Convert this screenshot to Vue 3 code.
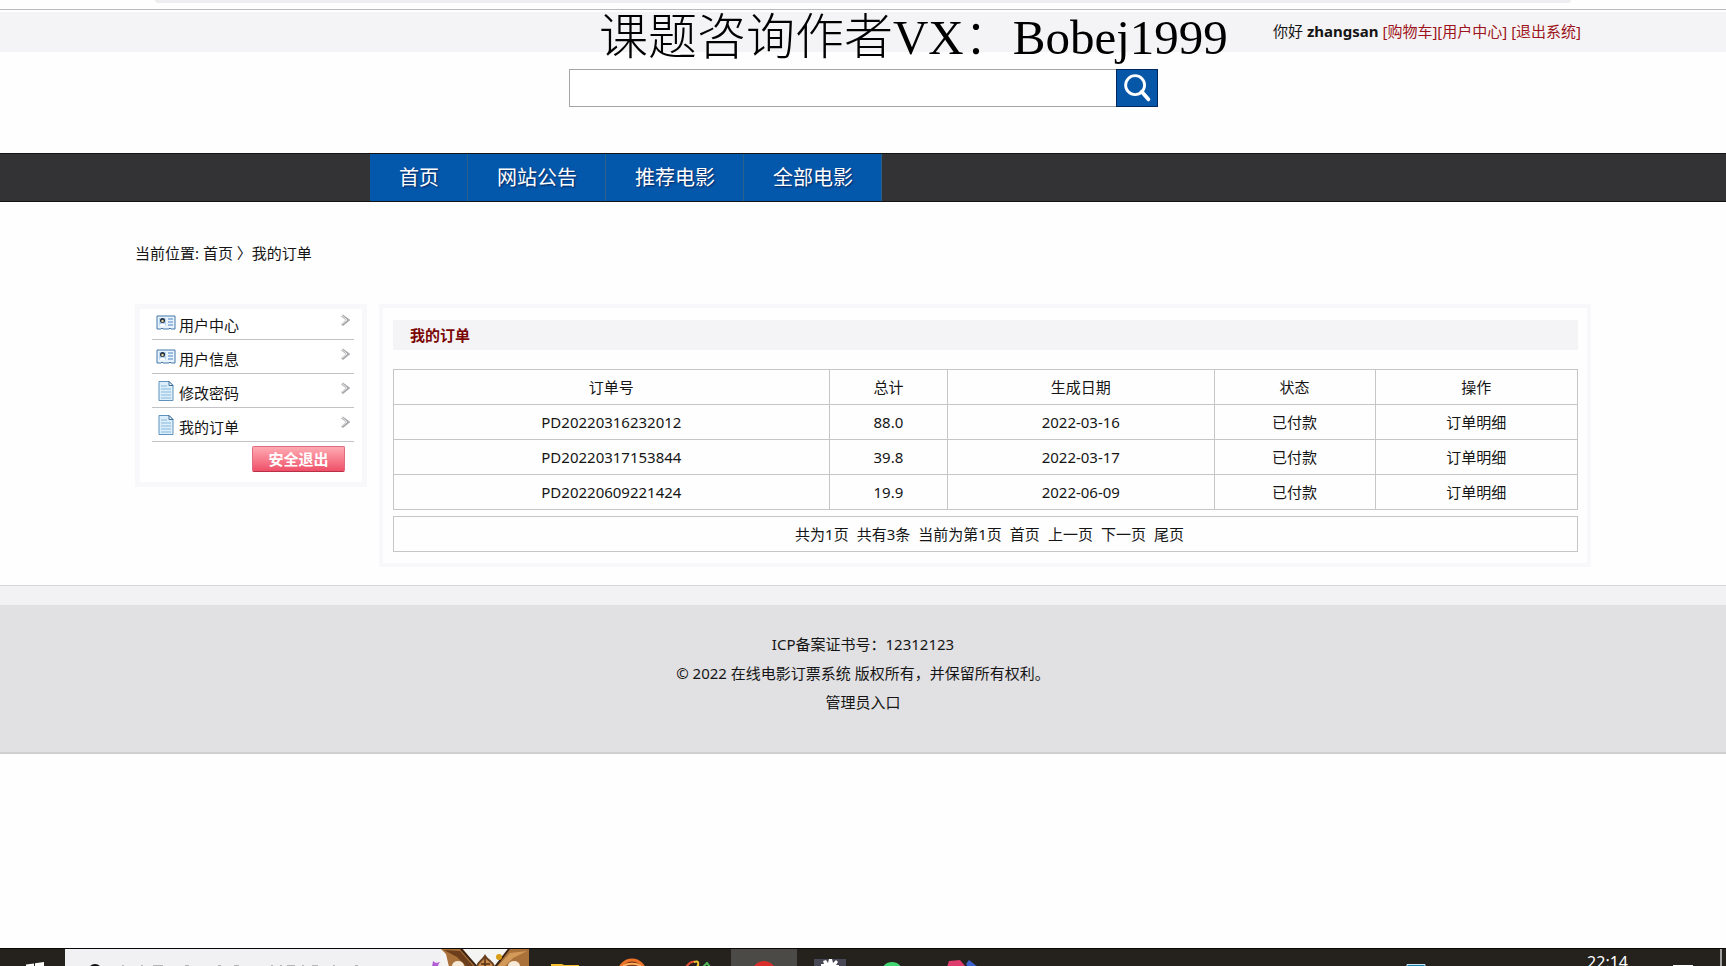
<script setup>
import { ref } from 'vue'

const keyword = ref('')
const navItems = ['首页', '网站公告', '推荐电影', '全部电影']
const menu = [
  { label: '用户中心', icon: 'card' },
  { label: '用户信息', icon: 'card' },
  { label: '修改密码', icon: 'doc' },
  { label: '我的订单', icon: 'doc' },
]
const columns = ['订单号', '总计', '生成日期', '状态', '操作']
const orders = [
  { id: 'PD20220316232012', total: '88.0', date: '2022-03-16' },
  { id: 'PD20220317153844', total: '39.8', date: '2022-03-17' },
  { id: 'PD20220609221424', total: '19.9', date: '2022-06-09' },
]
const pages = ['首页', '上一页', '下一页', '尾页']
</script>

<template>
  <div class="page">
    <div class="chrome"><div class="address"></div></div>

    <header class="topbar">
      <div class="wrap user">
        <span>你好 <b>zhangsan</b>&nbsp;</span>
        <a href="#">[购物车]</a><a href="#">[用户中心]</a>&nbsp;<a href="#">[退出系统]</a>
      </div>
      <div class="watermark">课题咨询作者VX：Bobej1999</div>
    </header>

    <form class="search" @submit.prevent>
      <input v-model="keyword" type="text" aria-label="搜索" />
      <button type="submit" aria-label="搜索">
        <svg viewBox="0 0 42 38" fill="none" stroke="#fff">
          <circle cx="19" cy="16" r="10" stroke-width="3" />
          <path d="M26 23 33 31" stroke-width="4" stroke-linecap="round" />
        </svg>
      </button>
    </form>

    <nav class="nav">
      <div class="wrap nav-list">
        <a v-for="item in navItems" :key="item" href="#">{{ item }}</a>
      </div>
    </nav>

    <div class="wrap crumbs">
      <span>当前位置: <a href="#">首页</a> 〉<a href="#">我的订单</a></span>
    </div>

    <main class="wrap content">
      <aside class="side">
        <ul>
          <li v-for="m in menu" :key="m.label">
            <svg v-if="m.icon === 'card'" class="icon" viewBox="0 0 20 20">
              <path d="M1 3h18v13h-4l-1-1-1 1H7l-1-1-1 1H1z" fill="#e8f3fc" stroke="#4477ab" />
              <path d="M3 5h7v8H3z" fill="#b5d6f2" />
              <circle cx="6.500" cy="7.500" r="2.500" fill="#1d2a3c" />
              <circle cx="6.500" cy="8" r="1.200" fill="#f3d79c" />
              <path d="M3.500 13c0-3 6-3 6 0z" fill="#fff" />
              <path d="M12 6h5M12 9h5M12 12h5" stroke="#4f86c4" />
            </svg>
            <svg v-else class="icon" viewBox="0 0 20 20">
              <path d="M3 .5h10l4 4v15H3z" fill="#dceefa" stroke="#5f93bd" />
              <path d="M13 .5v4h4z" fill="#fff" stroke="#3c6d99" />
              <path d="M5 5h6M5 8h10M5 11h10M5 14h10M5 17h10" stroke="#85b8dc" />
            </svg>
            <a href="#">{{ m.label }}</a>
            <svg class="chev" viewBox="0 0 10 12" fill="none">
              <path d="M2 1.500 8 6 2 11" stroke="#a9a9ad" stroke-width="2.800" />
              <path d="M2 1.500 7 6 2 10" stroke="#eee" stroke-width="1" />
            </svg>
          </li>
        </ul>
        <button class="logout" type="button">安全退出</button>
      </aside>

      <section class="panel">
        <h1>我的订单</h1>
        <table>
          <colgroup>
            <col class="c1" /><col class="c2" /><col class="c3" /><col class="c4" /><col class="c5" />
          </colgroup>
          <thead>
            <tr><th v-for="c in columns" :key="c" scope="col">{{ c }}</th></tr>
          </thead>
          <tbody>
            <tr v-for="o in orders" :key="o.id">
              <td>{{ o.id }}</td>
              <td>{{ o.total }}</td>
              <td>{{ o.date }}</td>
              <td>已付款</td>
              <td><a href="#">订单明细</a></td>
            </tr>
          </tbody>
        </table>
        <div class="pager">
          <span>共为1页</span><span>共有3条</span><span>当前为第1页</span>
          <a v-for="p in pages" :key="p" href="#">{{ p }}</a>
        </div>
      </section>
    </main>

    <footer class="footer">
      <p>ICP备案证书号：12312123</p>
      <p>© 2022 在线电影订票系统 版权所有，并保留所有权利。</p>
      <p><a href="#">管理员入口</a></p>
    </footer>

    <div class="taskbar">
      <button class="start" type="button" aria-label="开始">
        <svg viewBox="0 0 65 18"><path d="M26 15.500 34 14.500V18h-8zM35 14.300 44 13v5h-9z" fill="#fff" /></svg>
      </button>
      <div class="finder">
        <svg class="hint" viewBox="0 0 376 18" fill="none">
          <circle cx="30" cy="22" r="6" stroke="#111" stroke-width="2" />
          <path d="M57 17h2M76 17h2M88 17h10M120 17h4M153 17h3M169 17h5M207 16v2M216 16v2M222 17h8M238 16v2M247 17h6M268 17h2M290 17h3" stroke="#777" />
          <path d="m368 12 3 2 4-1-2 3 1 2h-7z" fill="#b15ed4" />
        </svg>
        <svg class="art" viewBox="0 0 88 18">
          <path d="M0 0h88v18H0z" fill="#f4f5f3" />
          <path d="M0 0h22l14 18H8L5 5z" fill="#aa713b" />
          <path d="M88 0H68L53 18h35z" fill="#aa713b" />
          <path d="M3 1 19 2 33 18h-7L16 8z" fill="#6d3e1b" />
          <path d="M86 2 69 4 56 18h7L72 9z" fill="#d39a59" />
          <path d="M20 0 36 18M68 0 54 18" stroke="#3c2415" stroke-width="2" />
          <ellipse cx="17" cy="17" rx="6" ry="5" fill="#f6e9d8" />
          <ellipse cx="73" cy="17" rx="6" ry="5" fill="#f6e9d8" />
          <path d="M36 18c0-5 5-6 8-11 3 5 9 6 9 11z" fill="#c98a4b" stroke="#67401f" stroke-width="2" />
          <path d="M44 9v9M40 15h9" stroke="#573116" stroke-width="1.500" />
          <circle cx="58" cy="8" r="3" fill="#d99d17" />
        </svg>
      </div>
      <div class="apps">
        <button type="button" aria-label="文件资源管理器">
          <svg viewBox="0 0 66 18"><path d="M18 15h11l2 1h15v2H18z" fill="#f6bd2c" /></svg>
        </button>
        <button type="button" aria-label="浏览器">
          <svg viewBox="0 0 66 18" fill="none"><circle cx="33" cy="24" r="13" fill="#7b3a14" stroke="#ef7328" stroke-width="3" /><path d="M24 17c5-3 13-3 18 0" stroke="#ffb160" stroke-width="2" /></svg>
        </button>
        <button type="button" aria-label="设计工具">
          <svg viewBox="0 0 66 18" fill="none" stroke-width="2"><path d="M21 18c3-4 6-6 9-5" stroke="#e64d32" /><path d="M29 13c5-2 5 2 3 5" stroke="#f2c432" /><path d="m38 18 4-4 3 4" stroke="#50ba5a" /></svg>
        </button>
        <button class="active" type="button" aria-label="录屏">
          <svg viewBox="0 0 66 18"><circle cx="33" cy="24" r="12" fill="#d92e2a" /></svg>
        </button>
        <button type="button" aria-label="视频工具">
          <svg viewBox="0 0 66 18"><path d="M17 10h32v8H17z" fill="#484756" /><path d="M24 18v-3h3l-1-3 3-1 2 3 1-4h3l1 4 3-3 2 2-2 3h3v2z" fill="#fff" /></svg>
        </button>
        <button type="button" aria-label="微信">
          <svg viewBox="0 0 66 18"><circle cx="29" cy="24" r="11" fill="#42d673" /></svg>
        </button>
        <button type="button" aria-label="开发工具">
          <svg viewBox="0 0 66 18"><path d="m20 12 11-1 6 7H18z" fill="#dd3c6c" /><path d="m37 15 3-4 9 7H39z" fill="#3c62ce" /></svg>
        </button>
      </div>
      <div class="tray">
        <svg class="screen" viewBox="0 0 20 18"><path d="M1 18v-2.500h18V18" fill="#1c7ca8" stroke="#c5e6f2" /></svg>
        <time>22:14</time>
        <svg class="note" viewBox="0 0 20 18"><path d="M0 16h20v2H0z" fill="#fff" /></svg>
        <i class="edge"></i>
      </div>
    </div>
  </div>
</template>

<style>
html, body { margin: 0; background: #fefefe; }
</style>

<style scoped>
* { box-sizing: border-box; }
.page {
  min-height: 100vh;
  display: flex;
  flex-direction: column;
  font-family: "Noto Sans", "Noto Sans CJK SC", sans-serif;
  font-size: 15px;
  line-height: 20px;
  color: #151515;
  background: #fefefe;
}
a { color: inherit; text-decoration: none; }
button { border: 0; padding: 0; margin: 0; font: inherit; }
svg { display: block; }
.wrap { width: 100%; max-width: 1456px; margin: 0 auto; }

.chrome { height: 10px; border-bottom: 1px solid #b9b9bb; padding: 0 9%; margin-bottom: 2px; }
.address { height: 3px; background: #eeeef1; border-radius: 0 0 8px 8px; }

.topbar { position: relative; height: 40px; background: #f4f4f6; }
.user { display: flex; justify-content: flex-end; padding: 9px 10px 0 0; }
.user a { color: #9d1420; }
.watermark {
  position: absolute;
  left: 34.7%;
  top: 0;
  font: 300 49px/52px "Liberation Serif", "Noto Sans CJK SC", serif;
  color: #000;
  white-space: nowrap;
}

.search { display: flex; width: 589px; max-width: 100%; height: 38px; margin: 17px auto 0; }
.search input { flex: 1; min-width: 0; border: 1px solid #a5a5a5; border-right: 0; padding: 0 10px; font: inherit; background: #fff; outline: 0; }
.search button { width: 42px; background: #0757a8; border: 1px solid #02275f; }
.search svg { width: 100%; height: 100%; }

.nav { margin-top: 46px; background: #333335; border-top: 1px solid #141414; border-bottom: 1px solid #141414; }
.nav-list { display: flex; padding-left: 235px; }
.nav a {
  padding: 1px 29px 0;
  font-size: 20px;
  line-height: 46px;
  color: #fff;
  background: #0458ab;
  text-shadow: 1px 1px 2px #00215a;
  box-shadow: inset -1px 0 #2b6189;
}

.crumbs { margin-top: 41px; }

.content { display: flex; align-items: flex-start; gap: 12px; margin-top: 41px; }
.side { width: 232px; flex: none; border: 5px solid #f8f8fa; padding: 0 8px 10px 12px; background: #fff; }
.side ul { list-style: none; margin: 0 0 4px; padding: 0; }
.side li { display: flex; align-items: flex-start; height: 34px; border-bottom: 1px solid #c3c3c5; padding: 7px 4px 0; }
.side li:first-child { height: 31px; padding-top: 4px; }
.side li a { flex: 1; margin: 2px 0 0 3px; }
.icon { width: 20px; height: 20px; }
.chev { width: 10px; height: 12px; margin-top: 1px; }
.logout {
  display: block;
  width: 93px;
  height: 26px;
  margin: 0 9px 0 auto;
  border: 1px solid #e06a7e;
  border-bottom-color: #b92f48;
  border-radius: 2px;
  background: linear-gradient(#ffabb3, #f77e8e 50%, #ee5068);
  color: #fff;
  font-weight: 700;
  line-height: 24px;
}
.taskbar button, .search button, .logout { cursor: pointer; }

.panel { flex: 1; min-width: 0; border: 4px solid #f8f8fa; padding: 12px 9px 11px 10px; background: #fefefe; }
h1 { margin: 0 0 19px; padding-left: 17px; font-size: 15px; line-height: 30px; background: #f4f4f6; color: #7b0606; }
table { width: 100%; border-collapse: collapse; table-layout: fixed; }
.c1 { width: 36.8%; }
.c2 { width: 10%; }
.c3 { width: 22.5%; }
.c4 { width: 13.6%; }
.c5 { width: 17.1%; }
th, td { height: 35px; padding: 0; border: 1px solid #c6c6c8; text-align: center; font-weight: 400; }
.pager { display: flex; justify-content: center; gap: 8px; margin-top: 6px; padding: 7px 0 7px 8px; border: 1px solid #c6c6c8; }

.footer {
  margin-top: 18px;
  border-top: 1px solid #d5d4d6;
  border-bottom: 2px solid #cfced0;
  background: linear-gradient(#f2f2f4 19px, #e1e0e2 19px);
  padding: 44px 0 35px;
  text-align: center;
}
.footer p { margin: 0; line-height: 29px; }

.taskbar { display: flex; height: 18px; margin-top: auto; overflow: hidden; background: #25221e; border-top: 1px solid #080808; }
.taskbar svg { height: 18px; }
.taskbar button { background: none; }
.start { width: 65px; }
.finder { display: flex; background: #f1f1f3; margin-right: 4px; }
.hint { width: 376px; }
.art { width: 88px; }
.apps { display: flex; }
.apps button { width: 66px; }
.taskbar .active { background: #4b4a47; }
.tray { display: flex; margin-left: auto; color: #fff; }
.screen { width: 20px; margin-right: 161px; }
.tray time { font-size: 16px; line-height: 26px; margin-right: 45px; }
.note { width: 20px; margin-right: 27px; }
.edge { border-left: 2px solid #a0a0a0; width: 6px; }
</style>
